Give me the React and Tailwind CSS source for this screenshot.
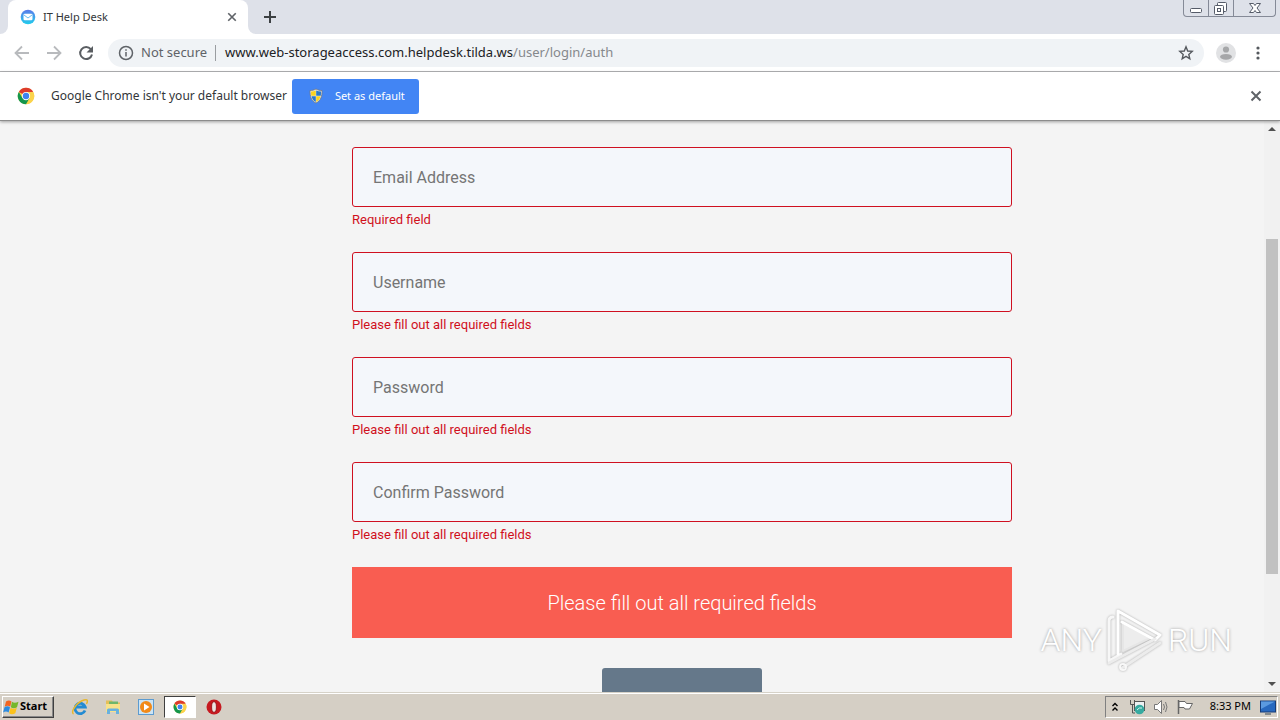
import React from "react";

const ui = "font-['Noto_Sans','Open_Sans',sans-serif]";

function ChromeLogo({ className }) {
  return (
    <svg viewBox="0 0 48 48" className={className} aria-hidden="true">
      <circle cx="24" cy="24" r="22" fill="#fbd34b" />
      <path d="M24 24 L4.9 13 A22 22 0 0 1 43.1 13 Z" fill="#dd3b2c" />
      <path d="M24 13 H43.1 A22 22 0 0 1 24 46 L33.5 29.5Z" fill="#fbd34b" />
      <path d="M4.9 13 A22 22 0 0 0 24 46 L33.5 29.5 L24 34 L14.5 29.5Z" fill="#14964c" />
      <circle cx="24" cy="24" r="11" fill="#fff" />
      <circle cx="24" cy="24" r="8.5" fill="#3f83ee" />
    </svg>
  );
}

function Cross({ className }) {
  return (
    <svg viewBox="0 0 12 12" className={className} fill="none" stroke="currentColor" strokeWidth="2" aria-hidden="true">
      <path d="M1.5 1.5 10.5 10.5M10.5 1.5 1.5 10.5" />
    </svg>
  );
}

function TabStrip() {
  return (
    <header className="flex h-[34px] shrink-0 items-start bg-[#dee1e9]">
      <div className="flex h-full w-2 items-end bg-white">
        <div className="h-full w-full rounded-br-lg bg-[#dee1e9]" />
      </div>
      <div className="flex h-full w-60 items-center rounded-t-lg bg-white pl-3 pr-2">
        <svg viewBox="0 0 16 16" className="size-4" aria-hidden="true">
          <defs>
            <linearGradient id="mail" x1="0" y1="0" x2="0" y2="1">
              <stop offset="0" stopColor="#5b7bea" />
              <stop offset="1" stopColor="#22cdec" />
            </linearGradient>
          </defs>
          <circle cx="8" cy="8" r="7.3" fill="url(#mail)" />
          <rect x="3.5" y="4.7" width="9" height="6.6" rx="1.3" fill="#fff" />
          <path d="M4 6l4 3 4-3" fill="none" stroke="#58b5ee" strokeWidth="0.9" />
        </svg>
        <span className="ml-[7px] flex-1 text-[11px] text-[#333639]">IT Help Desk</span>
        <button aria-label="Close tab" className="flex size-4 items-center justify-center text-[#5f6368]">
          <Cross className="size-[10px]" />
        </button>
      </div>
      <div className="h-full w-2 bg-white">
        <div className="h-full w-full rounded-bl-lg bg-[#dee1e9]" />
      </div>
      <button aria-label="New tab" className="ml-2 flex h-[34px] w-3 items-center justify-center text-[#3c4043]">
        <svg viewBox="0 0 12 12" className="size-3" stroke="currentColor" strokeWidth="2" aria-hidden="true">
          <path d="M6 0v12M0 6h12" />
        </svg>
      </button>
      <div className="ml-auto mr-1 flex h-[17px] overflow-hidden rounded-b border border-t-0 border-[#858a97] text-[#555b68]">
        <button aria-label="Minimize" className="flex w-[25px] items-center justify-center border-r border-[#858a97]">
          <svg viewBox="0 0 24 16" className="h-4 w-6" fill="#fff" stroke="currentColor" aria-hidden="true">
            <rect x="6.5" y="8.5" width="11" height="4" rx="1" />
          </svg>
        </button>
        <button aria-label="Restore" className="flex w-[25px] items-center justify-center border-r border-[#858a97]">
          <svg viewBox="0 0 24 16" className="h-4 w-6" fill="#fff" stroke="currentColor" aria-hidden="true">
            <rect x="8.5" y="2.5" width="9" height="9" rx="1" />
            <rect x="5.5" y="5.5" width="9" height="9" rx="1" />
            <rect x="8.5" y="8.5" width="3" height="3" />
          </svg>
        </button>
        <button aria-label="Close" className="flex w-[41px] items-center justify-center">
          <svg viewBox="0 0 24 16" className="h-4 w-6" fill="#fff" stroke="currentColor" aria-hidden="true">
            <path d="M6.5 3.5h4l1.500 2 1.500-2h4l-3.500 4.500 3.500 4.500h-4l-1.500-2-1.500 2h-4l3.500-4.500z" />
          </svg>
        </button>
      </div>
    </header>
  );
}

function Toolbar() {
  return (
    <div className="flex h-[38px] shrink-0 items-center border-b border-[#b3b4b6] bg-white pl-3 pr-[14px]">
      <button aria-label="Back" className="flex w-5 justify-center text-[#b8babd]">
        <svg viewBox="0 0 16 16" className="size-4" fill="none" stroke="currentColor" strokeWidth="1.8" aria-hidden="true">
          <path d="M15 8H2M8 1.5 1.5 8 8 14.5" />
        </svg>
      </button>
      <button aria-label="Forward" className="ml-3 flex w-5 justify-center text-[#b8babd]">
        <svg viewBox="0 0 16 16" className="size-4" fill="none" stroke="currentColor" strokeWidth="1.8" aria-hidden="true">
          <path d="M1 8H14M8 1.5 14.5 8 8 14.5" />
        </svg>
      </button>
      <button aria-label="Reload" className="ml-3 flex w-5 justify-center text-[#5a5e62]">
        <svg viewBox="0 0 16 16" className="size-4" aria-hidden="true">
          <path d="M12.8 4.2A6 6 0 1 0 14 9.5" fill="none" stroke="currentColor" strokeWidth="2" />
          <path d="M15 1v6.5H8.5z" fill="currentColor" />
        </svg>
      </button>
      <div className="ml-3 flex h-7 flex-1 items-center rounded-full bg-[#f0f3f6] pl-[10px] pr-[10px] text-[13px]">
        <svg viewBox="0 0 16 16" className="size-4" fill="none" stroke="#5f6368" strokeWidth="1.5" aria-hidden="true">
          <circle cx="8" cy="8" r="6.5" />
          <path d="M8 7v4.5M8 4.2v1.6" />
        </svg>
        <span className="ml-[7px] text-[#5f6368]">Not secure</span>
        <span className="ml-2 h-4 w-px bg-[#9a9da1]" />
        <span className="ml-[9px] flex-1 text-[#202124]">
          www.web-storageaccess.com.helpdesk.tilda.ws<span className="text-[#85888c]">/user/login/auth</span>
        </span>
        <button aria-label="Bookmark this page">
          <svg viewBox="0 0 16 16" className="size-4" fill="none" stroke="#55595e" strokeWidth="1.4" aria-hidden="true">
            <path d="M8 1.8 9.7 6l4.5.4-3.4 3 1 4.4L8 11.4l-3.8 2.4 1-4.4-3.4-3L6.3 6z" />
          </svg>
        </button>
      </div>
      <button aria-label="Profile" className="ml-3">
        <svg viewBox="0 0 20 20" className="size-5" aria-hidden="true">
          <circle cx="10" cy="10" r="10" fill="#e1e2e4" />
          <circle cx="10" cy="6.5" r="3.1" fill="#a6a7a9" />
          <ellipse cx="10" cy="13.8" rx="6" ry="2.9" fill="#a6a7a9" />
        </svg>
      </button>
      <button aria-label="Menu" className="ml-[14px]">
        <svg viewBox="0 0 16 16" className="size-4" fill="#55595e" aria-hidden="true">
          <circle cx="8" cy="3" r="1.6" />
          <circle cx="8" cy="8" r="1.6" />
          <circle cx="8" cy="13" r="1.6" />
        </svg>
      </button>
    </div>
  );
}

function InfoBar() {
  return (
    <div className="z-10 flex h-[49px] shrink-0 items-center border-b border-[#8c8c8c] bg-white pl-[17px] pr-4 shadow-[0_1px_3px_rgba(0,0,0,0.35)]">
      <ChromeLogo className="size-[18px]" />
      <span className="ml-4 text-xs text-[#333639]">Google Chrome isn't your default browser</span>
      <button className="ml-[5px] flex h-[35px] w-[127px] items-center rounded-[3px] bg-[#4285f4] pl-4 text-[11px] text-white">
        <svg viewBox="0 0 16 16" className="size-4" aria-hidden="true">
          <path d="M8 1c2 1.2 4 1.5 6 1.5 0 6-1 10-6 12.5C3 12.5 2 8.5 2 2.5 4 2.5 6 2.2 8 1z" fill="#e9edf0" stroke="#777" strokeWidth="0.8" />
          <path d="M7.8 2.5v5.3H3.2C3 6.5 3 5 3 3.5c1.8 0 3.4-.3 4.8-1zM8.2 8.2h4.3c-.7 2.8-2 4.5-4.3 5.7z" fill="#fbd21f" />
          <path d="M8.2 2.5v5.3h4.6c.2-1.3.2-2.8.2-4.3-1.800 0-3.400-.3-4.800-1zM7.8 8.2H3.5c.7 2.8 2 4.500 4.300 5.700z" fill="#2b79c9" />
        </svg>
        <span className="ml-[11px]">Set as default</span>
      </button>
      <button aria-label="Dismiss" className="ml-auto flex size-4 items-center justify-center text-[#5f6368]">
        <Cross className="size-3" />
      </button>
    </div>
  );
}

const fields = [
  { id: "email", label: "Email Address", type: "email", error: "Required field" },
  { id: "username", label: "Username", type: "text", error: "Please fill out all required fields" },
  { id: "password", label: "Password", type: "password", error: "Please fill out all required fields" },
  { id: "confirm", label: "Confirm Password", type: "password", error: "Please fill out all required fields" },
];

function LoginForm() {
  return (
    <div className="mx-auto grid max-w-[1200px] grid-cols-12">
      <form noValidate className="col-span-7 col-start-4 flex flex-col px-5 pt-[26px] font-[Roboto,sans-serif]">
        {fields.map((f) => (
          <div key={f.id} className="h-[105px]">
            <input
              id={f.id}
              type={f.type}
              placeholder={f.label}
              aria-label={f.label}
              aria-describedby={f.id + "-error"}
              className="block h-[60px] w-full rounded-[3px] border border-[#cf1020] bg-[#f4f7fb] px-5 text-base text-[#333] outline-none placeholder:text-[#757575] placeholder:opacity-100"
            />
            <p id={f.id + "-error"} className="mt-[3px] text-[13px] leading-5 text-[#d0101c]">
              {f.error}
            </p>
          </div>
        ))}
        <div role="alert" className="flex h-[71px] items-center justify-center bg-[#f95d51] text-xl font-light text-white">
          Please fill out all required fields
        </div>
        <button type="submit" aria-label="Submit" className="mx-auto mt-[30px] h-[60px] w-40 rounded-[3px] bg-[#65788a]" />
      </form>
    </div>
  );
}

function Scrollbar() {
  return (
    <div className="flex w-4 shrink-0 flex-col items-center bg-[#f1f1f1]" aria-hidden="true">
      <svg viewBox="0 0 16 16" className="size-4 shrink-0" fill="#505050">
        <path d="M4 10 8 6l4 4z" />
      </svg>
      <div className="w-3 flex-[102]" />
      <div className="w-3 flex-[334] bg-[#c1c1c1]" />
      <div className="w-3 flex-[102]" />
      <svg viewBox="0 0 16 16" className="size-4 shrink-0" fill="#505050">
        <path d="M4 6 8 10l4-4z" />
      </svg>
    </div>
  );
}

function Watermark() {
  return (
    <div className="pointer-events-none absolute bottom-[46px] right-12 flex items-center font-[Roboto,sans-serif] text-[32px] font-light leading-none text-white [text-shadow:0_0_3px_#999]">
      <span>ANY</span>
      <svg viewBox="0 0 60 68" className="mx-[3px] h-[68px] w-[60px] drop-shadow-[0_0_1px_#aaa]" fill="none" strokeLinejoin="round" strokeLinecap="round" aria-hidden="true">
        <path d="M18 17V45L45 32z" fill="#ededed" stroke="#e6e6e6" strokeWidth="2" />
        <path d="M8 11q-4 0-4 4V55L16 48" stroke="#f7f7f7" strokeWidth="3" />
        <path d="M13 48V5L55 29L50 34L17 16" stroke="#ffffff" strokeWidth="3" />
        <path d="M4 57 50 33M17 62 55 37" stroke="#ececec" strokeWidth="3" />
        <circle cx="18" cy="61" r="3" stroke="#f8f8f8" strokeWidth="2" />
      </svg>
      <span>RUN</span>
    </div>
  );
}

function Taskbar() {
  return (
    <footer className="flex h-7 shrink-0 items-center border-t border-[#d6d2c8] bg-[#d5cfc5] pl-[2px] pr-[2px] text-[11px] text-black shadow-[inset_0_1px_0_#fff]">
      <button className="flex h-[22px] w-[52px] items-center border border-b-[#404040] border-l-white border-r-[#404040] border-t-white font-bold shadow-[inset_-1px_-1px_0_#888]">
        <svg viewBox="0 0 16 16" className="size-4 shrink-0" aria-hidden="true">
          <path d="M3 2.500q3-2 5.500 0L7.200 7.700q-2.500-2-5.500 0z" fill="#f26522" />
          <path d="M9 2.700q2.500 2 6.500 0l-1.500 5.500q-3.500 2-6.200 0z" fill="#75b72a" />
          <path d="M1.500 8.300q3-2 5.500 0l-1.400 5.200q-2.500-2-5.500 0z" fill="#2b8be0" />
          <path d="M7.600 8.800q2.500 2 6.200 0l-1.500 5.500q-3.500 2-6.200 0z" fill="#fbc21b" />
        </svg>
        <span className="ml-px">Start</span>
      </button>
      <button aria-label="Internet Explorer" className="ml-[17px]">
        <svg viewBox="0 0 18 18" className="size-[18px]" fill="none" aria-hidden="true">
          <path d="M14 12.5A5.2 5.2 0 1 1 14.2 9H4.5" stroke="#238bd2" strokeWidth="2.8" />
          <path d="M2.5 16C-1 14 6 4 13 2c4-1.2 4 1 2.5 4" stroke="#e7b72c" strokeWidth="1.5" />
        </svg>
      </button>
      <button aria-label="File Explorer" className="ml-[15px]">
        <svg viewBox="0 0 18 18" className="size-[18px]" aria-hidden="true">
          <path d="M2 2.500h6l1 2h7V14H2z" fill="#e5bf59" />
          <path d="M5 3.500h9v4H5z" fill="#6fb66a" />
          <path d="M2 6h14v8H2z" fill="#f8e28a" />
          <path d="M3 16v-4q0-1.500 1.500-1.500h9q1.500 0 1.500 1.500v4h-3v-3H6v3z" fill="#69b1de" />
        </svg>
      </button>
      <button aria-label="Media Player" className="ml-[15px]">
        <svg viewBox="0 0 18 18" className="size-[18px]" aria-hidden="true">
          <rect x="1.5" y="1.5" width="15" height="15" fill="#cce4f4" stroke="#5c9bd0" />
          <circle cx="9" cy="9" r="6" fill="#f28a18" />
          <path d="M7 5.5 12.5 9 7 12.5z" fill="#fff" />
        </svg>
      </button>
      <button aria-label="Google Chrome" className="ml-[9px] flex h-[22px] w-8 items-center justify-center border border-b-white border-l-[#404040] border-r-white border-t-[#404040] bg-white">
        <ChromeLogo className="size-[14px]" />
      </button>
      <button aria-label="Opera" className="ml-[9px]">
        <svg viewBox="0 0 18 18" className="size-[18px]" aria-hidden="true">
          <circle cx="9" cy="9" r="7.5" fill="#c61a20" />
          <ellipse cx="9" cy="9" rx="2.400" ry="5.300" fill="#ece6e2" stroke="#8d0b10" strokeWidth="0.800" />
        </svg>
      </button>
      <div className="ml-auto flex h-[22px] items-center border border-b-white border-l-[#808080] border-r-white border-t-[#808080] pl-[5px]">
        <svg viewBox="0 0 8 12" className="h-3 w-2" fill="none" stroke="#000" strokeWidth="1.4" aria-hidden="true">
          <path d="M1.5 5 4 2.5 6.500 5M1.500 9.500 4 7l2.500 2.500" />
        </svg>
        <svg viewBox="0 0 18 18" className="ml-[9px] size-[18px]" aria-hidden="true">
          <path d="M2.5 2v4.5h4V2M4.500 6.500V15H7" fill="none" stroke="#555" />
          <rect x="6.500" y="3.500" width="10" height="9" fill="#edf1f3" stroke="#555" />
          <circle cx="11.500" cy="11.500" r="4.800" fill="#37aaa0" />
          <path d="M9 12q2-3 5-2" stroke="#d5f3ec" fill="none" />
        </svg>
        <svg viewBox="0 0 18 18" className="ml-[6px] size-[18px]" aria-hidden="true">
          <path d="M2.500 6.500h3l4-4v13l-4-4h-3z" fill="#fff" stroke="#777" />
          <path d="M11.500 6q2 3 0 6M13.500 4q3 5 0 10" fill="none" stroke="#777" />
        </svg>
        <svg viewBox="0 0 18 18" className="ml-[6px] size-[18px]" aria-hidden="true">
          <path d="M2.500 2v14" stroke="#666" strokeWidth="1.500" />
          <path d="M3 3.500h6l1.500 2h6l-3 5.500H9l-1-1.500H3z" fill="#fff" stroke="#666" />
        </svg>
        <time className="ml-4">8:33 PM</time>
        <svg viewBox="0 0 18 18" className="ml-2 size-[18px]" aria-hidden="true">
          <rect x="1.500" y="3" width="15" height="11" fill="#2869bf" stroke="#173c78" />
          <path d="M2 3.500h14L2 11z" fill="#5b9ae0" />
          <path d="M6 16h6" stroke="#345" />
        </svg>
      </div>
    </footer>
  );
}

export default function App() {
  return (
    <div className={"relative flex h-screen flex-col overflow-hidden bg-white " + ui}>
      <TabStrip />
      <Toolbar />
      <InfoBar />
      <div className="flex min-h-0 flex-1 bg-[#f4f4f4]">
        <main className="min-w-0 flex-1 overflow-hidden">
          <LoginForm />
        </main>
        <Scrollbar />
      </div>
      <Taskbar />
      <Watermark />
    </div>
  );
}
